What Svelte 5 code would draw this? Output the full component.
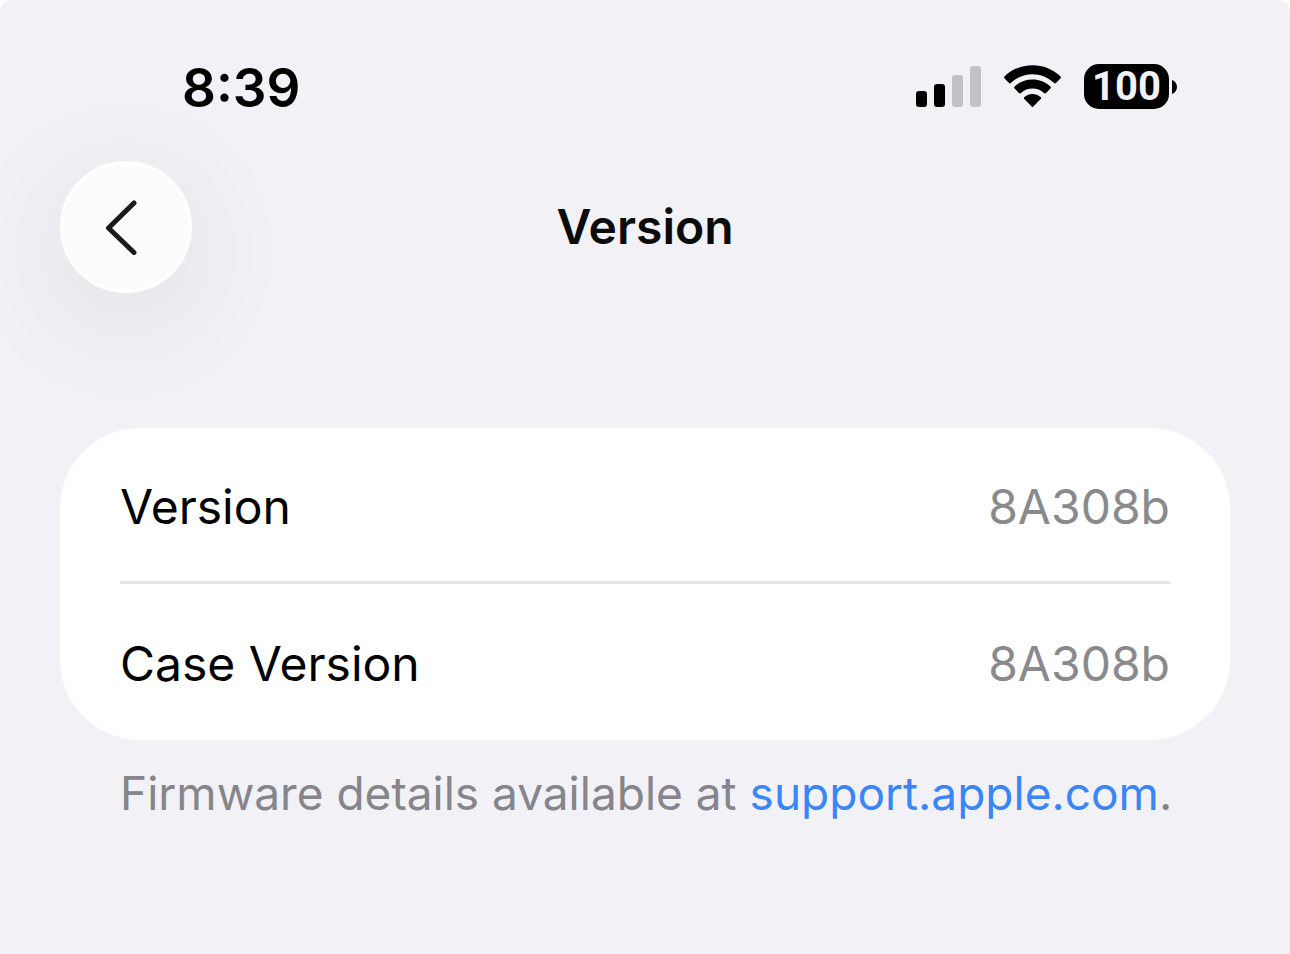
<script>
	const rows = [
		{ label: 'Version', value: '8A308b' },
		{ label: 'Case Version', value: '8A308b' }
	];
</script>

<div class="screen">
	<div class="status-bar">
		<time class="clock">8:39</time>
		<div class="indicators">
			<svg class="signal" width="66" height="41" viewBox="0 0 66 41" role="img" aria-label="Signal">
				<rect x="0" y="25" width="11" height="16" rx="3" />
				<rect x="18" y="18" width="11" height="23" rx="3" />
				<rect class="off" x="36" y="9" width="11" height="32" rx="3" />
				<rect class="off" x="54" y="0" width="11" height="41" rx="3" />
			</svg>
			<svg class="wifi" width="58" height="43" viewBox="0 0 58 43" role="img" aria-label="Wi-Fi">
				<path d="M.7 11.300C8.200 4.100 18 .2 28.500.2s20.300 3.900 27.800 11.100c.8.800.8 1.300.1 2.100l-4.200 4.400c-.8.800-1.500.8-2.300 0C44 12.300 36.500 9.200 28.500 9.200S13 12.300 7.100 17.800c-.8.800-1.500.8-2.300 0L.6 13.400c-.7-.8-.7-1.300.1-2.100z" />
				<path d="M10.700 21.400C15.500 17 21.700 14.600 28.500 14.600s13 2.400 17.800 6.800c.8.800.8 1.400.1 2.100l-4.300 4.500c-.7.700-1.300.6-2.100 0C36.800 25.100 32.900 23.600 28.500 23.600s-8.300 1.500-11.500 4.400c-.8.600-1.400.7-2.100 0L10.600 23.500c-.7-.7-.7-1.300.1-2.100z" />
				<path d="M20.500 31.900c2.300-1.900 5-2.900 8-2.900s5.700 1 8 2.900c.8.700.9 1.300.2 2l-7.100 7.400c-.8.800-1.400.8-2.200 0l-7.100-7.400c-.7-.7-.6-1.300.2-2z" />
			</svg>
			<div class="battery">
				<span class="level">100</span>
				<svg width="5" height="14" viewBox="0 0 5 14" aria-hidden="true">
					<path d="M0 0c3 1 5 4 5 7s-2 6-5 7z" />
				</svg>
			</div>
		</div>
	</div>

	<header class="nav">
		<button class="back" type="button" aria-label="Back">
			<svg width="34" height="56" viewBox="0 0 34 56" aria-hidden="true">
				<path d="M29 4 3.500 29 29 53.500" />
			</svg>
		</button>
		<h1>Version</h1>
	</header>

	<main>
		<dl class="card">
			{#each rows as row}
				<div class="row">
					<dt>{row.label}</dt>
					<dd>{row.value}</dd>
				</div>
			{/each}
		</dl>
		<p class="note">
			Firmware details available at <a href="https://support.apple.com">support.apple.com</a>.
		</p>
	</main>
</div>

<style>
	:global(body) {
		margin: 0;
		background: #fff;
	}

	.screen {
		min-height: 100vh;
		box-sizing: border-box;
		background: #f1f1f6;
		border-radius: 12px 12px 0 0;
		font-family: Inter, 'Liberation Sans', sans-serif;
		color: #000;
		overflow: hidden;
	}

	/* Status bar */
	.status-bar {
		display: flex;
		align-items: flex-start;
		justify-content: space-between;
		padding: 64px 113px 0 182px;
	}

	.clock {
		font-size: 53px;
		font-weight: 600;
		line-height: 48px;
	}

	.indicators {
		display: flex;
		align-items: center;
		gap: 22px;
	}

	.off {
		fill: #c1c1c6;
	}

	.battery {
		display: flex;
		align-items: center;
		gap: 3px;
	}

	.level {
		width: 85px;
		border-radius: 15px;
		background: #000;
		color: #f1f1f6;
		font-family: Roboto, sans-serif;
		font-size: 40px;
		font-weight: 700;
		line-height: 45px;
		text-align: center;
	}

	/* Navigation */
	.nav {
		display: grid;
		grid-template-columns: 132px 1fr 132px;
		align-items: center;
		padding: 49px 60px 0;
	}

	.back {
		display: flex;
		align-items: center;
		justify-content: center;
		width: 132px;
		height: 132px;
		padding: 0 8px 0 0;
		border: 3px solid #fff;
		border-radius: 50%;
		background: #fcfcfe;
		box-shadow: 0 24px 120px rgba(0, 0, 0, 0.09);
		cursor: pointer;
	}

	.back path {
		fill: none;
		stroke: #1a1a1d;
		stroke-width: 5;
		stroke-linecap: round;
		stroke-linejoin: round;
	}

	h1 {
		margin: 0;
		color: #0b0b0c;
		font-size: 48px;
		font-weight: 600;
		line-height: 60px;
		text-align: center;
	}

	/* Details */
	main {
		padding: 135px 60px 60px;
	}

	.card {
		margin: 0;
		padding: 0 60px;
		border-radius: 80px;
		background: #fff;
	}

	.row {
		display: flex;
		align-items: center;
		justify-content: space-between;
		height: 156px;
		padding-top: 4px;
		box-sizing: border-box;
		font-size: 48px;
		line-height: 60px;
	}

	.row:not(:last-child) {
		border-bottom: 3px solid #e6e6e6;
	}

	dd {
		margin: 0;
		color: #8a8a8c;
	}

	.note {
		margin: 0;
		padding: 24px 48px 0 60px;
		color: #86858b;
		font-size: 46px;
		line-height: 58px;
	}

	.note a {
		color: #3b86f7;
		text-decoration: none;
	}
</style>
